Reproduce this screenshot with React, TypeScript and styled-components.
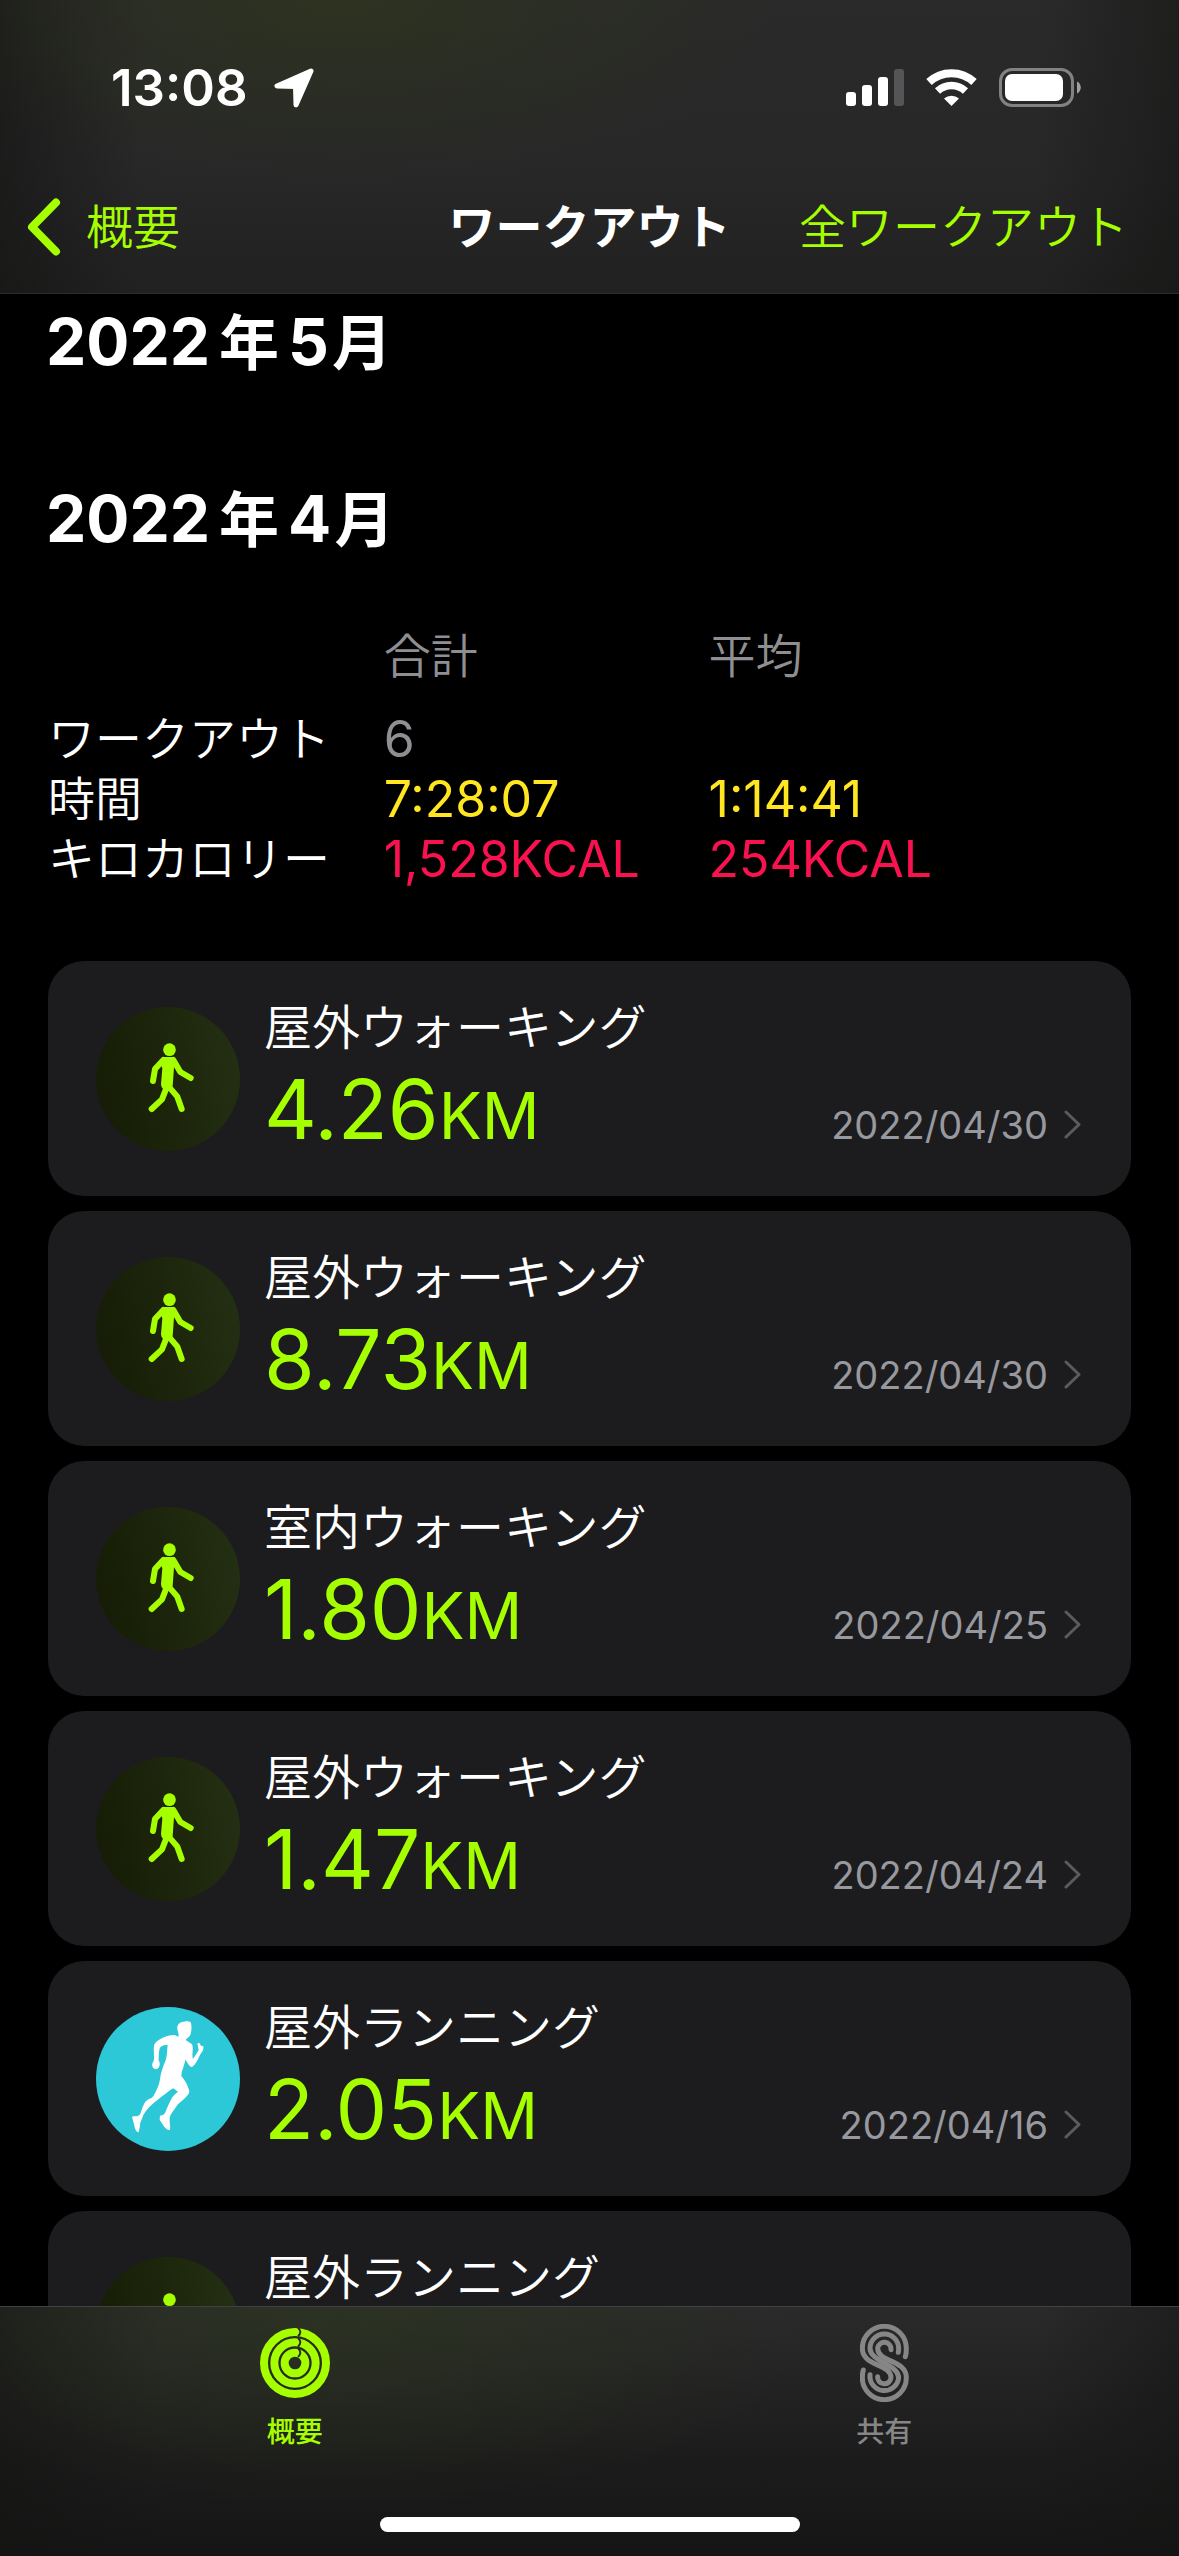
import React from "react";
import styled, { createGlobalStyle } from "styled-components";

const lime = "#a6ff00";
const gray = "#8e8e93";

const GlobalStyle = createGlobalStyle`
  * { box-sizing: border-box; }
  html, body { margin: 0; background: #000; }
  body {
    color: #fff;
    font-family: Inter, "Noto Sans CJK JP", sans-serif;
    font-size: 47px;
    line-height: 60px;
  }
  svg { display: block; flex: none; }
`;

const Screen = styled.div`
  display: flex;
  flex-direction: column;
  height: 100vh;
  overflow: hidden;
  background: #000;
`;

const Header = styled.header`
  flex: none;
  border-bottom: 1px solid #2c2c2c;
  background:
    radial-gradient(ellipse 440px 190px at 340px 0, rgba(48, 60, 20, 0.45), rgba(48, 60, 20, 0) 100%),
    linear-gradient(90deg, rgba(16, 16, 14, 0.5), rgba(16, 16, 14, 0) 12%, rgba(16, 16, 14, 0) 88%, rgba(16, 16, 14, 0.45)),
    linear-gradient(180deg, #2a2a2a, #272728 60%, #212121);
`;

const StatusBar = styled.div`
  display: flex;
  align-items: center;
  justify-content: space-between;
  height: 160px;
  padding: 16px 98px 0 111px;
`;

const StatusGroup = styled.div<{ $gap: number }>`
  display: flex;
  align-items: center;
  gap: ${(p) => p.$gap}px;
`;

const Clock = styled.time`
  font-size: 51px;
  font-weight: 600;
`;

const NavBar = styled.nav`
  display: grid;
  grid-template-columns: 1fr auto 1fr;
  align-items: center;
  height: 133px;
  padding: 0 27px;
`;

const NavButton = styled.button<{ $end?: boolean }>`
  display: flex;
  align-items: center;
  gap: 25px;
  justify-self: ${(p) => (p.$end ? "end" : "start")};
  padding: 0 ${(p) => (p.$end ? 24 : 0)}px 0 0;
  border: 0;
  background: none;
  color: ${lime};
  font: inherit;
  font-weight: 350;
  white-space: nowrap;
`;

const NavTitle = styled.h1`
  margin: 0;
  font-size: 47px;
  font-weight: 700;
  line-height: 60px;
`;

const Content = styled.main`
  flex: 1;
  min-height: 0;
  overflow: hidden;
  padding: 8px 48px 0;
`;

const Month = styled.h2`
  margin: 0 -2px 96px;
  font-size: 64px;
  font-weight: 700;
  line-height: 80px;

  & + & {
    margin-bottom: 66px;
  }
`;

const MonthUnit = styled.span<{ $spaced?: boolean }>`
  padding: 0 ${(p) => (p.$spaced ? 9 : 3)}px;
  font-size: 60px;
`;

const Summary = styled.table`
  width: 100%;
  margin-bottom: 72px;
  border-collapse: collapse;
  table-layout: fixed;

  th, td {
    height: 60px;
    padding: 0;
    font-weight: 350;
    line-height: 60px;
    text-align: left;
    white-space: nowrap;
  }
  thead th {
    height: 83px;
    color: ${gray};
    vertical-align: top;
  }
`;

const SummaryHead = styled.th<{ $width?: string }>`
  width: ${(p) => p.$width ?? "auto"};
`;

const Value = styled.td<{ $color: string }>`
  && {
    color: ${(p) => p.$color};
    font-size: 50px;
    font-weight: 400;
  }
`;

const List = styled.ul`
  display: flex;
  flex-direction: column;
  gap: 15px;
  margin: 0;
  padding: 0;
  list-style: none;
`;

const Card = styled.a`
  display: flex;
  align-items: center;
  gap: 24px;
  height: 235px;
  padding: 0 50px 0 48px;
  border-radius: 36px;
  background: #1c1c1e;
  color: #fff;
  text-decoration: none;
`;

const CardBody = styled.div`
  flex: 1;
  align-self: flex-start;
  display: flex;
  flex-direction: column;
  padding-top: 37px;
`;

const Activity = styled.span`
  font-size: 48px;
  font-weight: 350;
`;

const Metrics = styled.div`
  display: flex;
  align-items: baseline;
  justify-content: space-between;
  line-height: 104px;
`;

const Distance = styled.span`
  color: ${lime};
  font-size: 82px;
`;

const Unit = styled.span`
  font-size: 64px;
`;

const Day = styled.span`
  display: flex;
  align-items: baseline;
  gap: 16px;
  color: #98989f;
  font-size: 38px;
`;

const TabBar = styled.nav`
  flex: none;
  height: 250px;
  border-top: 1px solid #414143;
  background:
    radial-gradient(ellipse 480px 200px at 340px 0, rgba(46, 60, 24, 0.45), rgba(46, 60, 24, 0) 100%),
    linear-gradient(90deg, rgba(20, 20, 19, 0.6), rgba(20, 20, 19, 0) 14%, rgba(20, 20, 19, 0) 88%, rgba(20, 20, 19, 0.5)),
    linear-gradient(180deg, #2a2a2b, #1c1c1c 60%, #151515);
`;

const Tabs = styled.div`
  display: grid;
  grid-template-columns: 1fr 1fr;
  height: 210px;
`;

const Tab = styled.button<{ $active?: boolean }>`
  display: flex;
  flex-direction: column;
  align-items: center;
  gap: 10px;
  padding: 17px 0 0;
  border: 0;
  background: none;
  color: ${(p) => (p.$active ? lime : "#868687")};
  font: inherit;
  font-size: 28px;
  font-weight: 500;
  line-height: 40px;
`;

const HomeIndicator = styled.div`
  width: 420px;
  height: 15px;
  margin: 0 auto;
  border-radius: 8px;
  background: #fff;
`;

const LocationIcon = () => (
  <svg width="40" height="40" viewBox="0 0 40 40" fill="#fff" stroke="#fff" strokeWidth="5" strokeLinejoin="round">
    <path d="M37 3 L3 18 L21.500 18.500 L22 37 Z" />
  </svg>
);

const SignalIcon = () => (
  <svg width="58" height="38" viewBox="0 0 58 38" fill="#fff">
    <rect x="0" y="23" width="10" height="14" rx="3" />
    <rect x="16" y="16" width="10" height="21" rx="3" />
    <rect x="32" y="8" width="10" height="29" rx="3" />
    <rect x="48" y="0" width="10" height="37" rx="3" fill="#555557" />
  </svg>
);

const WifiIcon = () => (
  <svg width="51" height="38" viewBox="0 0 51 38" fill="none" stroke="#fff">
    <path d="M3 13 A33 33 0 0 1 48 13" strokeWidth="8" />
    <path d="M11.500 22 A20.500 20.500 0 0 1 39.500 22" strokeWidth="7.500" />
    <path d="M25.500 37 L18 29.500 A11.500 11.500 0 0 1 33 29.500 Z" fill="#fff" stroke="none" />
  </svg>
);

const BatteryIcon = () => (
  <svg width="82" height="40" viewBox="0 0 82 40">
    <rect x="1.500" y="1.500" width="72" height="36" rx="11.500" fill="none" stroke="#828282" strokeWidth="3" />
    <rect x="6" y="6" width="58" height="27" rx="7" fill="#fff" />
    <path d="M78 13.500 C83 15.500 83 23.500 78 25.500 Z" fill="#a0a0a0" />
  </svg>
);

const BackIcon = () => (
  <svg width="34" height="58" viewBox="0 0 34 58" fill="none" stroke={lime} strokeWidth="8" strokeLinecap="round" strokeLinejoin="round">
    <path d="M29 4.500 L5 29 L29 53.500" />
  </svg>
);

const ChevronIcon = () => (
  <svg width="17" height="29" viewBox="0 0 17 29" fill="none" stroke="#5b5b5f" strokeWidth="3" strokeLinecap="round" strokeLinejoin="round">
    <path d="M2 2 L15 14.500 L2 27" />
  </svg>
);

const WalkIcon = () => (
  <svg width="144" height="144" viewBox="48 48 432 432">
    <defs>
      <linearGradient id="walk" x1="0" y1="0.6" x2="1" y2="0.4">
        <stop offset="0" stopColor="#161c05" />
        <stop offset="1" stopColor="#232f12" />
      </linearGradient>
    </defs>
    <circle cx="264" cy="264" r="216" fill="url(#walk)" />
    <circle cx="268.500" cy="176" r="19" fill={lime} />
    <path d="M250 198 H278 Q287 201 283 215 L278 285 Q274 300 262 299 Q244 296 243 280 L247 232 L240 215 Z" fill={lime} />
    <g fill="none" stroke={lime} strokeWidth="18" strokeLinecap="round" strokeLinejoin="round">
      <path d="M250 207 L225 234 L219 270" />
      <path d="M280 207 L301 243 L332 261" />
      <path d="M262 284 L246 325 L215 354" />
      <path d="M268 289 L292 317 L305 354" />
    </g>
  </svg>
);

const RunIcon = () => (
  <svg width="144" height="144" viewBox="48 48 432 432">
    <circle cx="264" cy="264" r="216" fill="#2dc8d7" />
    <path
      fill="#fff"
      d="M292 115 C290 100 300 92 312 92 L320 90 L332 93 C336 105 335 120 331 132 C327 140 320 141 317 147 L336 160 C342 172 334 190 339 204 L356 178 L352 157 L358 156 L363 164 L370 166 C372 180 362 187 358 196 C353 208 346 222 336 228 C326 226 322 212 316 206 C313 225 304 240 304 255 C315 268 328 290 328 304 C320 322 300 332 290 345 C280 360 271 370 269 380 C268 395 272 405 270 416 C262 420 255 410 249 402 L239 386 L240 374 C248 374 254 370 256 364 C261 350 268 335 276 320 C282 311 290 305 294 302 L280 292 C265 300 250 314 235 325 C215 340 200 355 190 372 C186 385 179 395 180 405 L176 424 C168 424 164 411 162 400 L156 377 C165 374 176 378 181 368 C188 350 190 335 203 326 C215 321 218 320 222 312 C232 295 238 280 240 265 C242 245 250 225 258 205 C262 190 261 173 263 162 C251 161 242 165 239 172 C236 185 236 198 236 208 C242 216 240 232 228 235 C216 234 213 220 221 210 C224 195 219 175 223 160 C230 146 262 131 284 132 L295 137 C298 132 294 125 292 115 Z"
    />
  </svg>
);

const RingsIcon = () => (
  <svg width="70" height="78" viewBox="90 73 210 234" fill="none">
    {[93, 62, 31].map((r) => (
      <g key={r}>
        <circle cx="195" cy="190" r={r} stroke={lime} strokeWidth="24" />
        <path d={`M204 ${177 - r} Q218 ${190 - r} 204 ${203 - r}`} stroke="#2a2d24" strokeWidth="6" />
      </g>
    ))}
  </svg>
);

const SharingIcon = () => (
  <svg width="49" height="78" viewBox="117 72 147 234" fill="none" stroke="#868687" strokeWidth="15" strokeLinecap="round">
    <path d="M253 170 C256 162 256 154 256 145 A66 66 0 0 0 124 145 C124 200 210 190 210 233 A20 20 0 0 1 170 230" />
    <path d="M232 157 Q233 151 233 145 A43 43 0 0 0 147 145 C147 185 233 193 233 233 A43 43 0 0 1 147 224" />
    <path d="M210 149 A20 20 0 1 0 170 145 C170 188 256 178 256 233 A66 66 0 0 1 124 233 Q124 220 127 210" />
  </svg>
);

const workouts = [
  { activity: "屋外ウォーキング", distance: "4.26", day: "2022/04/30" },
  { activity: "屋外ウォーキング", distance: "8.73", day: "2022/04/30" },
  { activity: "室内ウォーキング", distance: "1.80", day: "2022/04/25" },
  { activity: "屋外ウォーキング", distance: "1.47", day: "2022/04/24" },
  { activity: "屋外ランニング", distance: "2.05", day: "2022/04/16", run: true },
  { activity: "屋外ランニング", distance: "", day: "" },
];

const totals = [
  { label: "ワークアウト", total: "6", average: "", color: gray },
  { label: "時間", total: "7:28:07", average: "1:14:41", color: "#ffe620" },
  { label: "キロカロリー", total: "1,528KCAL", average: "254KCAL", color: "#fa114f" },
];

const MonthHeading = ({ year, month }: { year: number; month: number }) => (
  <Month>
    {year}
    <MonthUnit $spaced>年</MonthUnit>
    {month}
    <MonthUnit>月</MonthUnit>
  </Month>
);

export default function App() {
  return (
    <Screen>
      <GlobalStyle />
      <Header>
        <StatusBar>
          <StatusGroup $gap={26}>
            <Clock>13:08</Clock>
            <LocationIcon />
          </StatusGroup>
          <StatusGroup $gap={22}>
            <SignalIcon />
            <WifiIcon />
            <BatteryIcon />
          </StatusGroup>
        </StatusBar>
        <NavBar>
          <NavButton type="button">
            <BackIcon />
            概要
          </NavButton>
          <NavTitle>ワークアウト</NavTitle>
          <NavButton type="button" $end>
            全ワークアウト
          </NavButton>
        </NavBar>
      </Header>
      <Content>
        <MonthHeading year={2022} month={5} />
        <MonthHeading year={2022} month={4} />
        <Summary>
          <thead>
            <tr>
              <SummaryHead $width="31%" />
              <SummaryHead $width="30%" scope="col">合計</SummaryHead>
              <SummaryHead scope="col">平均</SummaryHead>
            </tr>
          </thead>
          <tbody>
            {totals.map((row) => (
              <tr key={row.label}>
                <th scope="row">{row.label}</th>
                <Value $color={row.color}>{row.total}</Value>
                <Value $color={row.color}>{row.average}</Value>
              </tr>
            ))}
          </tbody>
        </Summary>
        <List>
          {workouts.map((w, i) => (
            <li key={i}>
              <Card href="#">
                {w.run ? <RunIcon /> : <WalkIcon />}
                <CardBody>
                  <Activity>{w.activity}</Activity>
                  {w.distance && (
                    <Metrics>
                      <Distance>
                        {w.distance}
                        <Unit>KM</Unit>
                      </Distance>
                      <Day>
                        {w.day}
                        <ChevronIcon />
                      </Day>
                    </Metrics>
                  )}
                </CardBody>
              </Card>
            </li>
          ))}
        </List>
      </Content>
      <TabBar>
        <Tabs>
          <Tab type="button" $active>
            <RingsIcon />
            概要
          </Tab>
          <Tab type="button">
            <SharingIcon />
            共有
          </Tab>
        </Tabs>
        <HomeIndicator />
      </TabBar>
    </Screen>
  );
}
